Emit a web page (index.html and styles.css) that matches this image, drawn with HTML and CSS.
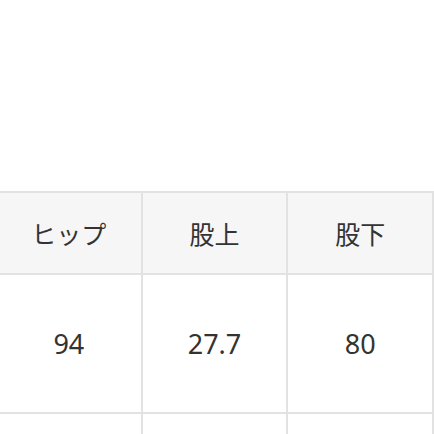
FILE: index.html
```html
<!DOCTYPE html>
<html lang="ja">
<head>
<meta charset="utf-8">
<link rel="stylesheet" href="styles.css">
</head>
<body>
<div class="page">
  <table class="size-table">
    <tr class="head">
      <th>ヒップ</th>
      <th>股上</th>
      <th>股下</th>
    </tr>
    <tr class="data">
      <td>94</td>
      <td>27.7</td>
      <td>80</td>
    </tr>
    <tr class="data next">
      <td></td>
      <td></td>
      <td></td>
    </tr>
  </table>
</div>
</body>
</html>
```
FILE: styles.css
```css
html, body {
  margin: 0;
  padding: 0;
  background: #ffffff;
  overflow: hidden;
}
.page {
  width: 434px;
  height: 434px;
  overflow: hidden;
  padding-top: 191px;
  box-sizing: border-box;
}
.size-table {
  border-collapse: collapse;
  table-layout: fixed;
  width: 439px;
  margin-left: -5px;
  font-family: "Noto Sans CJK JP", "Noto Sans", sans-serif;
  color: #333333;
}
.size-table th,
.size-table td {
  border: 2px solid #e2e2e2;
  text-align: center;
  padding: 0;
}
.head th {
  height: 80px;
  background: #f6f6f6;
  font-weight: 400;
  font-size: 25px;
}
.data td {
  height: 137px;
  font-family: "Noto Sans", "Liberation Sans", sans-serif;
  font-size: 27px;
  font-weight: 400;
}
```
